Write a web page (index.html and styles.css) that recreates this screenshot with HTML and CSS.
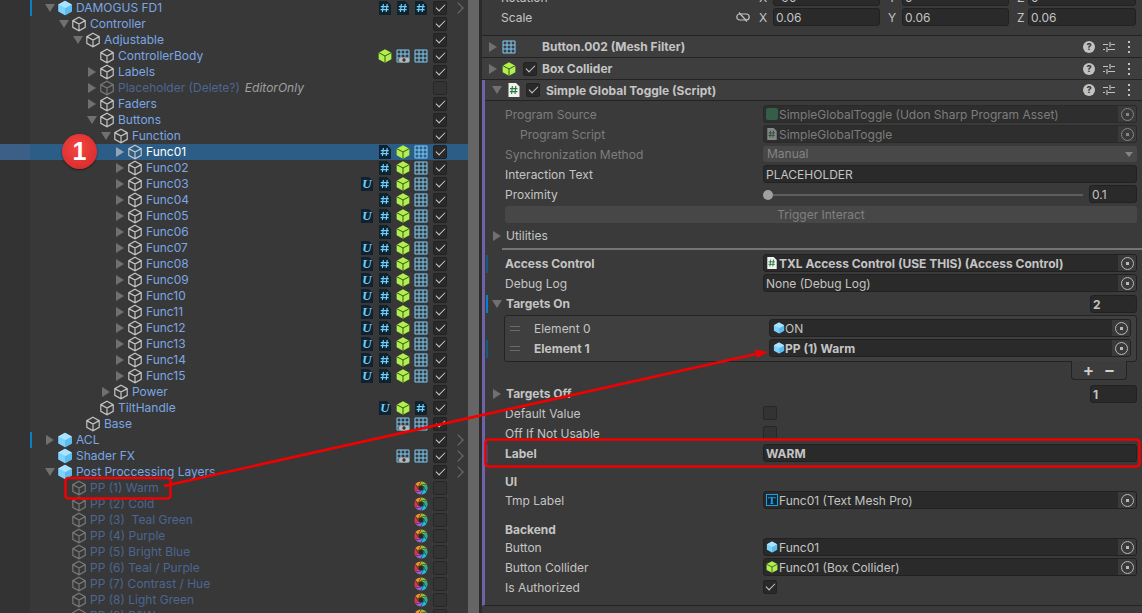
FILE: index.html
```html
<!DOCTYPE html>
<html lang="en">

<head>
    <title>Hierarchy and Inspector</title>
    <link rel="stylesheet" href="styles.css">
</head>

<body>
    <svg class="defs" width="0" height="0">
        <symbol id="cube" viewBox="0 0 16 16"><path class="cube-line" d="M8 1.2 14.2 4.6v6.8L8 14.8 1.8 11.4V4.6zM1.8 4.6 8 8l6.2-3.4M8 8v6.8"/></symbol>
        <symbol id="prefab" viewBox="0 0 16 16"><path fill="#7fd2fb" d="M8 .8 14.8 4.4v7.2L8 15.2 1.2 11.6V4.4z"/><path fill="#a9e3ff" d="M8 .8 14.8 4.4 8 8 1.2 4.4z"/><path fill="#5bbdee" d="M8 8.6 14.8 5v6.6L8 15.2z"/></symbol>
        <symbol id="green" viewBox="1 .5 14 15"><path fill="#aff04c" d="M8 .8 14.8 4.4v7.2L8 15.2 1.2 11.6V4.4z"/><path fill="none" stroke="#37451f" d="M1.2 4.4 8 8l6.8-3.6M8 8v7.2"/></symbol>
        <symbol id="grid" viewBox="0 0 14 14"><path class="grid-line" d="M1 1h12v12H1zM5 1v12M9 1v12M1 5h12M1 9h12"/></symbol>
        <symbol id="grid-eye" viewBox="0 0 14 14"><path class="grid-line" d="M1 1h12v12H1zM5 1v12M9 1v12M1 5h12M1 9h12"/><path fill="#383838" d="M1.5 11 8 7.2 14 11 8 14z"/><ellipse cx="8" cy="11" rx="5.6" ry="2.8" fill="#b8b8b8"/><circle cx="8" cy="11" r="1.7" fill="#333"/></symbol>
        <symbol id="hash" viewBox="0 0 14 14"><path fill="#10222d" d="M1 0h8l4 4v10H1z"/><path class="hash-line" d="M5.4 3 4.4 11M9.2 3 8.2 11M2.8 5.6h8M2.6 8.6h8"/></symbol>
        <symbol id="doc" viewBox="0 0 14 14"><path fill="#f2f2f2" d="M1.5 0h7.5l3.5 3.5V14H1.5z"/><path fill="none" stroke="#2b7a3c" stroke-width="1.1" d="M5.4 3 4.6 11M8.8 3 8 11M3 5.6h7.4M2.9 8.6h7.4"/></symbol>
        <symbol id="aperture" viewBox="0 0 16 16">
            <path fill="#8fbf2a" d="M8 8 8 .5A7.5 7.5 0 0 1 14.5 4.25z"/>
            <path fill="#1fb39a" d="M8 8 14.5 4.25A7.5 7.5 0 0 1 14.5 11.75z"/>
            <path fill="#2bb8ea" d="M8 8 14.5 11.75A7.5 7.5 0 0 1 8 15.5z"/>
            <path fill="#b05ac8" d="M8 8 8 15.5A7.5 7.5 0 0 1 1.5 11.75z"/>
            <path fill="#df3348" d="M8 8 1.5 11.75A7.5 7.5 0 0 1 1.5 4.25z"/>
            <path fill="#f0952a" d="M8 8 1.5 4.25A7.5 7.5 0 0 1 8 .5z"/>
            <path fill="none" stroke="#2a2a2a" stroke-width=".7" d="M8 4.6 13.8 3.6M10.9 6.3 14 11.9M10.9 9.7 8 15.4M8 11.4 2.2 12.4M5.1 9.7 2 4.1M5.1 6.3 8 .6"/>
            <path fill="#2a2a2a" d="M8 4.6 10.9 6.3v3.4L8 11.4 5.1 9.7V6.3z"/>
        </symbol>
        <symbol id="sliders" viewBox="0 0 12 12"><path class="tool-line" d="M0 3.5h5M8 3.5h4M7 1v5M0 8.5h2M5 8.5h7M4 6v5"/></symbol>
        <symbol id="dots" viewBox="0 0 4 12"><path fill="#c2c2c2" d="M1 0h2v2H1zM1 5h2v2H1zM1 10h2v2H1z"/></symbol>
        <symbol id="unlink" viewBox="0 0 14 10"><rect class="tool-line" x=".8" y="2" width="12.4" height="6" rx="3"/><path class="tool-line" d="M3 0.5 11 9.5"/></symbol>
    </svg>

    <div class="editor">
        <section class="hierarchy">
            <div class="row lv0"><span class="rail mark"></span><span class="tw d"></span><svg class="ico"><use href="#prefab"/></svg><span class="nm">DAMOGUS FD1</span><span class="badges"><svg><use href="#hash"/></svg><svg><use href="#hash"/></svg><svg><use href="#hash"/></svg></span><span class="check on"></span><span class="more"><i></i></span></div>
            <div class="row lv1"><span class="rail"></span><span class="tw d"></span><svg class="ico"><use href="#cube"/></svg><span class="nm">Controller</span><span class="badges"></span><span class="check on"></span><span class="more"></span></div>
            <div class="row lv2"><span class="rail"></span><span class="tw d"></span><svg class="ico"><use href="#cube"/></svg><span class="nm">Adjustable</span><span class="badges"></span><span class="check on"></span><span class="more"></span></div>
            <div class="row lv3"><span class="rail"></span><span class="tw"></span><svg class="ico"><use href="#cube"/></svg><span class="nm">ControllerBody</span><span class="badges"><svg><use href="#green"/></svg><svg><use href="#grid-eye"/></svg><svg><use href="#grid"/></svg></span><span class="check on"></span><span class="more"></span></div>
            <div class="row lv3"><span class="rail"></span><span class="tw r"></span><svg class="ico"><use href="#cube"/></svg><span class="nm">Labels</span><span class="badges"></span><span class="check on"></span><span class="more"></span></div>
            <div class="row lv3 dim"><span class="rail"></span><span class="tw r"></span><svg class="ico"><use href="#cube"/></svg><span class="nm">Placeholder (Delete?)</span><em class="tag">EditorOnly</em><span class="badges"></span><span class="check"></span><span class="more"></span></div>
            <div class="row lv3"><span class="rail"></span><span class="tw r"></span><svg class="ico"><use href="#cube"/></svg><span class="nm">Faders</span><span class="badges"></span><span class="check on"></span><span class="more"></span></div>
            <div class="row lv3"><span class="rail"></span><span class="tw d"></span><svg class="ico"><use href="#cube"/></svg><span class="nm">Buttons</span><span class="badges"></span><span class="check on"></span><span class="more"></span></div>
            <div class="row lv4"><span class="rail"></span><span class="tw d"></span><svg class="ico"><use href="#cube"/></svg><span class="nm">Function</span><span class="badges"></span><span class="check on"></span><span class="more"></span></div>
            <div class="row lv5 selected"><span class="rail"></span><span class="tw r"></span><svg class="ico"><use href="#cube"/></svg><span class="nm">Func01</span><span class="badges"><svg><use href="#hash"/></svg><svg><use href="#green"/></svg><svg><use href="#grid"/></svg></span><span class="check on"></span><span class="more"></span></div>
            <div class="row lv5"><span class="rail"></span><span class="tw r"></span><svg class="ico"><use href="#cube"/></svg><span class="nm">Func02</span><span class="badges"><svg><use href="#hash"/></svg><svg><use href="#green"/></svg><svg><use href="#grid"/></svg></span><span class="check on"></span><span class="more"></span></div>
            <div class="row lv5"><span class="rail"></span><span class="tw r"></span><svg class="ico"><use href="#cube"/></svg><span class="nm">Func03</span><span class="badges"><span class="udon">U</span><svg><use href="#hash"/></svg><svg><use href="#green"/></svg><svg><use href="#grid"/></svg></span><span class="check on"></span><span class="more"></span></div>
            <div class="row lv5"><span class="rail"></span><span class="tw r"></span><svg class="ico"><use href="#cube"/></svg><span class="nm">Func04</span><span class="badges"><svg><use href="#hash"/></svg><svg><use href="#green"/></svg><svg><use href="#grid"/></svg></span><span class="check on"></span><span class="more"></span></div>
            <div class="row lv5"><span class="rail"></span><span class="tw r"></span><svg class="ico"><use href="#cube"/></svg><span class="nm">Func05</span><span class="badges"><span class="udon">U</span><svg><use href="#hash"/></svg><svg><use href="#green"/></svg><svg><use href="#grid"/></svg></span><span class="check on"></span><span class="more"></span></div>
            <div class="row lv5"><span class="rail"></span><span class="tw r"></span><svg class="ico"><use href="#cube"/></svg><span class="nm">Func06</span><span class="badges"><svg><use href="#hash"/></svg><svg><use href="#green"/></svg><svg><use href="#grid"/></svg></span><span class="check on"></span><span class="more"></span></div>
            <div class="row lv5"><span class="rail"></span><span class="tw r"></span><svg class="ico"><use href="#cube"/></svg><span class="nm">Func07</span><span class="badges"><span class="udon">U</span><svg><use href="#hash"/></svg><svg><use href="#green"/></svg><svg><use href="#grid"/></svg></span><span class="check on"></span><span class="more"></span></div>
            <div class="row lv5"><span class="rail"></span><span class="tw r"></span><svg class="ico"><use href="#cube"/></svg><span class="nm">Func08</span><span class="badges"><span class="udon">U</span><svg><use href="#hash"/></svg><svg><use href="#green"/></svg><svg><use href="#grid"/></svg></span><span class="check on"></span><span class="more"></span></div>
            <div class="row lv5"><span class="rail"></span><span class="tw r"></span><svg class="ico"><use href="#cube"/></svg><span class="nm">Func09</span><span class="badges"><span class="udon">U</span><svg><use href="#hash"/></svg><svg><use href="#green"/></svg><svg><use href="#grid"/></svg></span><span class="check on"></span><span class="more"></span></div>
            <div class="row lv5"><span class="rail"></span><span class="tw r"></span><svg class="ico"><use href="#cube"/></svg><span class="nm">Func10</span><span class="badges"><span class="udon">U</span><svg><use href="#hash"/></svg><svg><use href="#green"/></svg><svg><use href="#grid"/></svg></span><span class="check on"></span><span class="more"></span></div>
            <div class="row lv5"><span class="rail"></span><span class="tw r"></span><svg class="ico"><use href="#cube"/></svg><span class="nm">Func11</span><span class="badges"><span class="udon">U</span><svg><use href="#hash"/></svg><svg><use href="#green"/></svg><svg><use href="#grid"/></svg></span><span class="check on"></span><span class="more"></span></div>
            <div class="row lv5"><span class="rail"></span><span class="tw r"></span><svg class="ico"><use href="#cube"/></svg><span class="nm">Func12</span><span class="badges"><span class="udon">U</span><svg><use href="#hash"/></svg><svg><use href="#green"/></svg><svg><use href="#grid"/></svg></span><span class="check on"></span><span class="more"></span></div>
            <div class="row lv5"><span class="rail"></span><span class="tw r"></span><svg class="ico"><use href="#cube"/></svg><span class="nm">Func13</span><span class="badges"><span class="udon">U</span><svg><use href="#hash"/></svg><svg><use href="#green"/></svg><svg><use href="#grid"/></svg></span><span class="check on"></span><span class="more"></span></div>
            <div class="row lv5"><span class="rail"></span><span class="tw r"></span><svg class="ico"><use href="#cube"/></svg><span class="nm">Func14</span><span class="badges"><span class="udon">U</span><svg><use href="#hash"/></svg><svg><use href="#green"/></svg><svg><use href="#grid"/></svg></span><span class="check on"></span><span class="more"></span></div>
            <div class="row lv5"><span class="rail"></span><span class="tw r"></span><svg class="ico"><use href="#cube"/></svg><span class="nm">Func15</span><span class="badges"><span class="udon">U</span><svg><use href="#hash"/></svg><svg><use href="#green"/></svg><svg><use href="#grid"/></svg></span><span class="check on"></span><span class="more"></span></div>
            <div class="row lv4"><span class="rail"></span><span class="tw r"></span><svg class="ico"><use href="#cube"/></svg><span class="nm">Power</span><span class="badges"></span><span class="check on"></span><span class="more"></span></div>
            <div class="row lv3"><span class="rail"></span><span class="tw"></span><svg class="ico"><use href="#cube"/></svg><span class="nm">TiltHandle</span><span class="badges"><span class="udon">U</span><svg><use href="#green"/></svg><svg><use href="#hash"/></svg></span><span class="check on"></span><span class="more"></span></div>
            <div class="row lv2"><span class="rail"></span><span class="tw"></span><svg class="ico"><use href="#cube"/></svg><span class="nm">Base</span><span class="badges"><svg><use href="#grid-eye"/></svg><svg><use href="#grid"/></svg></span><span class="check on"></span><span class="more"></span></div>
            <div class="row lv0"><span class="rail mark"></span><span class="tw r"></span><svg class="ico"><use href="#prefab"/></svg><span class="nm">ACL</span><span class="badges"></span><span class="check on"></span><span class="more"><i></i></span></div>
            <div class="row lv0"><span class="rail"></span><span class="tw"></span><svg class="ico"><use href="#prefab"/></svg><span class="nm">Shader FX</span><span class="badges"><svg><use href="#grid-eye"/></svg><svg><use href="#grid"/></svg></span><span class="check on"></span><span class="more"><i></i></span></div>
            <div class="row lv0"><span class="rail"></span><span class="tw d"></span><svg class="ico"><use href="#prefab"/></svg><span class="nm">Post Proccessing Layers</span><span class="badges"></span><span class="check on"></span><span class="more"><i></i></span></div>
            <div class="row lv1 dim"><span class="rail"></span><span class="tw"></span><svg class="ico"><use href="#cube"/></svg><span class="nm">PP (1) Warm</span><span class="badges"><svg><use href="#aperture"/></svg></span><span class="check"></span><span class="more"></span></div>
            <div class="row lv1 dim"><span class="rail"></span><span class="tw"></span><svg class="ico"><use href="#cube"/></svg><span class="nm">PP (2) Cold</span><span class="badges"><svg><use href="#aperture"/></svg></span><span class="check"></span><span class="more"></span></div>
            <div class="row lv1 dim"><span class="rail"></span><span class="tw"></span><svg class="ico"><use href="#cube"/></svg><span class="nm">PP (3) &nbsp;Teal Green</span><span class="badges"><svg><use href="#aperture"/></svg></span><span class="check"></span><span class="more"></span></div>
            <div class="row lv1 dim"><span class="rail"></span><span class="tw"></span><svg class="ico"><use href="#cube"/></svg><span class="nm">PP (4) Purple</span><span class="badges"><svg><use href="#aperture"/></svg></span><span class="check"></span><span class="more"></span></div>
            <div class="row lv1 dim"><span class="rail"></span><span class="tw"></span><svg class="ico"><use href="#cube"/></svg><span class="nm">PP (5) Bright Blue</span><span class="badges"><svg><use href="#aperture"/></svg></span><span class="check"></span><span class="more"></span></div>
            <div class="row lv1 dim"><span class="rail"></span><span class="tw"></span><svg class="ico"><use href="#cube"/></svg><span class="nm">PP (6) Teal / Purple</span><span class="badges"><svg><use href="#aperture"/></svg></span><span class="check"></span><span class="more"></span></div>
            <div class="row lv1 dim"><span class="rail"></span><span class="tw"></span><svg class="ico"><use href="#cube"/></svg><span class="nm">PP (7) Contrast / Hue</span><span class="badges"><svg><use href="#aperture"/></svg></span><span class="check"></span><span class="more"></span></div>
            <div class="row lv1 dim"><span class="rail"></span><span class="tw"></span><svg class="ico"><use href="#cube"/></svg><span class="nm">PP (8) Light Green</span><span class="badges"><svg><use href="#aperture"/></svg></span><span class="check"></span><span class="more"></span></div>
            <div class="row lv1 dim"><span class="rail"></span><span class="tw"></span><svg class="ico"><use href="#cube"/></svg><span class="nm">PP (9) B&amp;W</span><span class="badges"><svg><use href="#aperture"/></svg></span><span class="check"></span><span class="more"></span></div>
        </section>

        <div class="scrollbar"></div>

        <section class="inspector">
            <div class="transform">
                <div class="vec-row">
                    <span class="vec-lbl">Rotation</span>
                    <span class="vec-link"></span>
                    <div class="vec">
                        <div class="cell"><span class="axis">X</span><span class="field num">-90</span></div>
                        <div class="cell"><span class="axis">Y</span><span class="field num">0</span></div>
                        <div class="cell"><span class="axis axis-z">Z</span><span class="field num">0</span></div>
                    </div>
                </div>
                <div class="vec-row">
                    <span class="vec-lbl">Scale</span>
                    <svg class="vec-link"><use href="#unlink"/></svg>
                    <div class="vec">
                        <div class="cell"><span class="axis">X</span><span class="field num">0.06</span></div>
                        <div class="cell"><span class="axis">Y</span><span class="field num">0.06</span></div>
                        <div class="cell"><span class="axis axis-z">Z</span><span class="field num">0.06</span></div>
                    </div>
                </div>
            </div>

            <div class="comp-head">
                <span class="tw r"></span><svg class="comp-ico"><use href="#grid"/></svg><span class="comp-blank"></span>
                <span class="comp-title">Button.002 (Mesh Filter)</span>
                <span class="comp-tools"><span class="t-help">?</span><svg class="t-sliders"><use href="#sliders"/></svg><svg class="t-dots"><use href="#dots"/></svg></span>
            </div>
            <div class="comp-head">
                <span class="tw r"></span><svg class="comp-ico"><use href="#green"/></svg><span class="check on"></span>
                <span class="comp-title">Box Collider</span>
                <span class="comp-tools"><span class="t-help">?</span><svg class="t-sliders"><use href="#sliders"/></svg><svg class="t-dots"><use href="#dots"/></svg></span>
            </div>

            <div class="script">
                <div class="comp-head script-head">
                    <span class="tw d"></span><svg class="comp-ico"><use href="#doc"/></svg><span class="check on"></span>
                    <span class="comp-title">Simple Global Toggle (Script)</span>
                    <span class="comp-tools"><span class="t-help">?</span><svg class="t-sliders"><use href="#sliders"/></svg><svg class="t-dots"><use href="#dots"/></svg></span>
                </div>

                <div class="props">
                    <div class="prop off"><span class="lbl">Program Source</span><div class="field obj"><i class="mini-asset"></i><span>SimpleGlobalToggle (Udon Sharp Program Asset)</span><span class="pick"></span></div></div>
                    <div class="prop off"><span class="lbl sub">Program Script</span><div class="field obj"><svg class="mini"><use href="#doc"/></svg><span>SimpleGlobalToggle</span><span class="pick"></span></div></div>
                    <div class="prop off"><span class="lbl">Synchronization Method</span><div class="drop">Manual<i></i></div></div>
                    <div class="prop"><span class="lbl">Interaction Text</span><div class="field">PLACEHOLDER</div></div>
                    <div class="prop"><span class="lbl">Proximity</span><div class="slider"><span class="track"><i></i></span><span class="field num">0.1</span></div></div>
                    <div class="trigger">Trigger Interact</div>

                    <div class="prop fold"><span class="tw r"></span><span class="lbl">Utilities</span></div>
                    <div class="rule"></div>

                    <div class="prop changed strong"><span class="lbl">Access Control</span><div class="field obj"><svg class="mini"><use href="#doc"/></svg><span>TXL Access Control (USE THIS) (Access Control)</span><span class="pick"></span></div></div>
                    <div class="prop"><span class="lbl">Debug Log</span><div class="field obj"><span>None (Debug Log)</span><span class="pick"></span></div></div>
                    <div class="prop fold changed bright strong"><span class="tw d"></span><span class="lbl">Targets On</span><span class="field count">2</span></div>

                    <div class="list">
                        <div class="el"><span class="grip"></span><span class="el-lbl">Element 0</span><div class="field obj"><svg class="mini"><use href="#prefab"/></svg><span>ON</span><span class="pick"></span></div></div>
                        <div class="el changed strong"><span class="grip"></span><span class="el-lbl">Element 1</span><div class="field obj"><svg class="mini"><use href="#prefab"/></svg><span>PP (1) Warm</span><span class="pick"></span></div></div>
                    </div>
                    <div class="list-foot"><span>+</span><span>−</span></div>

                    <div class="prop fold strong"><span class="tw r"></span><span class="lbl">Targets Off</span><span class="field count">1</span></div>
                    <div class="prop"><span class="lbl">Default Value</span><span class="check"></span></div>
                    <div class="prop"><span class="lbl">Off If Not Usable</span><span class="check"></span></div>
                    <div class="prop changed strong"><span class="lbl">Label</span><div class="field">WARM</div></div>

                    <div class="group first">UI</div>
                    <div class="prop"><span class="lbl">Tmp Label</span><div class="field obj"><span class="mini-tmp">T</span><span>Func01 (Text Mesh Pro)</span><span class="pick"></span></div></div>

                    <div class="group">Backend</div>
                    <div class="prop"><span class="lbl">Button</span><div class="field obj"><svg class="mini"><use href="#prefab"/></svg><span>Func01</span><span class="pick"></span></div></div>
                    <div class="prop"><span class="lbl">Button Collider</span><div class="field obj"><svg class="mini"><use href="#green"/></svg><span>Func01 (Box Collider)</span><span class="pick"></span></div></div>
                    <div class="prop"><span class="lbl">Is Authorized</span><span class="check on"></span></div>
                </div>
            </div>
        </section>
    </div>

    <!-- annotations drawn over the screenshot -->
    <svg class="notes" width="1142" height="613" viewBox="0 0 1142 613">
        <rect x="65.5" y="478" width="105" height="20.5" rx="3"/>
        <rect x="485.5" y="439.5" width="654" height="27" rx="3"/>
        <path class="note-line" d="M164 486 756 354"/>
        <path class="note-head" d="M768 352 755 349.5 757 358z"/>
    </svg>
    <div class="callout">1</div>
</body>

</html>
```

FILE: styles.css
```css
* {
    box-sizing: border-box;
}

html, body {
    height: 100%;
}

body {
    margin: 0;
    overflow: hidden;
    background-color: #3a3a3a;
    color: #c4c4c4;
    font-family: Inter, "Noto Sans", sans-serif;
    font-size: 12px;
}

.defs {
    position: absolute;
}

.editor {
    display: flex;
    height: 613px;
    overflow: hidden;
}

/* icon strokes */
.cube-line {
    fill: none;
    stroke: #c4c4c4;
    stroke-width: 1.2;
}

.grid-line {
    fill: none;
    stroke: #7ccffb;
    stroke-width: 1;
}

.hash-line {
    fill: none;
    stroke: #6fd0ff;
    stroke-width: 1.2;
}

.tool-line {
    fill: none;
    stroke: #c2c2c2;
    stroke-width: 1.2;
}

/* hierarchy */
.hierarchy {
    width: 468px;
    flex: none;
    background-color: #383838;
}

.row {
    display: flex;
    align-items: center;
    height: 16px;
    color: #7ba6e4;
}

.rail {
    width: 30px;
    height: 16px;
    flex: none;
    background-color: #333333;
}

.rail.mark {
    border-right: 2px solid #0b7fc4;
    width: 32px;
    margin-right: -2px;
    background-clip: padding-box;
}

.tw {
    flex: none;
    width: 14px;
    height: 10px;
    margin-left: 13px;
    position: relative;
}

.tw::after {
    content: "";
    position: absolute;
}

.tw.r::after {
    left: 3px;
    top: 0;
    border-left: 8px solid #707070;
    border-top: 5px solid transparent;
    border-bottom: 5px solid transparent;
}

.tw.d::after {
    left: 2px;
    top: 1px;
    border-top: 8px solid #707070;
    border-left: 5px solid transparent;
    border-right: 5px solid transparent;
}

.lv1 .tw { margin-left: 27px; }
.lv2 .tw { margin-left: 41px; }
.lv3 .tw { margin-left: 55px; }
.lv4 .tw { margin-left: 69px; }
.lv5 .tw { margin-left: 83px; }

.ico {
    width: 16px;
    height: 16px;
    flex: none;
    margin-right: 3px;
}

.nm, .tag {
    line-height: 15px;
    padding-bottom: 1px;
}

.nm {
    white-space: pre;
}

.tag {
    margin-left: 5px;
    color: #a0a0a0;
}

.badges {
    display: flex;
    gap: 4px;
    margin-left: auto;
    margin-right: 5px;
}

.badges svg {
    width: 14px;
    height: 14px;
}

.udon {
    width: 14px;
    height: 14px;
    background-color: #10222d;
    clip-path: polygon(7% 0, 64% 0, 93% 28%, 93% 100%, 7% 100%);
    color: #6fd0ff;
    font-family: "Liberation Serif", serif;
    font-style: italic;
    font-weight: 700;
    font-size: 13px;
    line-height: 14px;
    text-align: center;
}

.check {
    display: block;
    position: relative;
    flex: none;
    width: 14px;
    height: 14px;
    background-color: #333333;
    border: 1px solid #272727;
    border-radius: 2px;
}

.check.on {
    background-color: #292929;
    border-color: #222222;
}

.check.on::after {
    content: "";
    position: absolute;
    left: 2px;
    top: 2px;
    width: 8px;
    height: 4px;
    border-left: 1.5px solid #cccccc;
    border-bottom: 1.5px solid #cccccc;
    transform: rotate(-45deg);
}

.more {
    width: 21px;
    height: 16px;
    flex: none;
    position: relative;
}

.more i {
    position: absolute;
    left: 7px;
    top: 4px;
    width: 8px;
    height: 8px;
    border-top: 1.5px solid #707070;
    border-right: 1.5px solid #707070;
    transform: rotate(45deg);
}

.dim {
    color: #4c6693;
}

.dim .ico {
    opacity: 0.45;
}

.selected {
    background-color: #2c5d87;
    color: #ffffff;
}

.selected .rail {
    background-color: #3c5f88;
}

.selected .tw.r::after {
    border-left-color: #8ea6bb;
}

/* splitter between the two panes */
.scrollbar {
    width: 14px;
    flex: none;
    background-color: #656565;
    border-right: 3px solid #2b2b2b;
}

/* inspector */
.inspector {
    flex: 1;
    min-width: 0;
    background-color: #3a3a3a;
}

.transform {
    margin-top: -12px;
    padding-bottom: 7px;
    border-bottom: 1px solid #232323;
}

.vec-row {
    display: flex;
    align-items: flex-start;
    height: 20px;
    padding-left: 19px;
    padding-right: 5px;
}

.vec-lbl {
    width: 235px;
    line-height: 19px;
}

.vec-link {
    width: 14px;
    height: 10px;
    margin-top: 4px;
    margin-right: 9px;
    flex: none;
}

.vec {
    display: grid;
    grid-template-columns: 121px 121px 119px;
    gap: 8px;
    flex: 1;
}

.cell {
    display: flex;
    align-items: center;
}

.axis {
    width: 14px;
    flex: none;
}

.axis-z {
    width: 11px;
}

.field {
    flex: 1;
    min-width: 0;
    height: 18px;
    line-height: 17px;
    padding-left: 2px;
    background-color: #2a2a2a;
    border: 1px solid #212121;
    border-radius: 3px;
    white-space: nowrap;
}

.comp-head {
    display: flex;
    align-items: center;
    height: 22px;
    padding-left: 4px;
    padding-right: 7px;
    background-color: #3e3e3e;
    border-bottom: 1px solid #232323;
    font-weight: 700;
}

.comp-head .tw {
    margin-left: 0;
    width: 15px;
}

.comp-ico {
    width: 14px;
    height: 14px;
    flex: none;
    margin-left: 1px;
    margin-right: 7px;
}

.comp-blank {
    width: 14px;
    flex: none;
}

.comp-title {
    margin-left: 5px;
}

.comp-tools {
    display: flex;
    align-items: center;
    margin-left: auto;
}

.t-help {
    width: 12px;
    height: 12px;
    border-radius: 50%;
    background-color: #c2c2c2;
    color: #383838;
    font-size: 9px;
    font-weight: 800;
    line-height: 12px;
    text-align: center;
}

.t-sliders {
    width: 12px;
    height: 12px;
    margin-left: 8px;
}

.t-dots {
    width: 4px;
    height: 12px;
    margin-left: 12px;
    margin-right: 4px;
}

.script {
    border-left: 3px solid #6e62a8;
    margin-bottom: 0;
    border-bottom: 1px solid #232323;
}

.script-head {
    height: 21px;
    padding-left: 5px;
}

.script-head .comp-ico {
    margin-left: 2px;
    margin-right: 5px;
}

.script-head .comp-title {
    margin-left: 6px;
}

.props {
    padding: 4px 5px 7px 20px;
}

.prop {
    display: flex;
    align-items: flex-start;
    position: relative;
    height: 20px;
}

.prop > .check {
    margin-top: 2px;
}

.lbl {
    width: 258px;
    flex: none;
    line-height: 20px;
}

.lbl.sub {
    padding-left: 15px;
}

.off .lbl {
    color: #7d7d7d;
}

.off .field {
    background-color: #2e2e2e;
    border-color: #2a2a2a;
    color: #7d7d7d;
}

.off .pick::after {
    opacity: 0.6;
}

.off .mini, .off .mini-asset {
    opacity: 0.45;
}

.strong .lbl, .strong .el-lbl, .strong .field {
    font-weight: 700;
}

.changed::before {
    content: "";
    position: absolute;
    left: -19px;
    top: 1px;
    width: 2px;
    height: 18px;
    background-color: #175a80;
}

.changed.bright::before {
    background-color: #0b7fc4;
}

.obj {
    display: flex;
    align-items: center;
    overflow: hidden;
}

.obj > span:not(.pick):not(.mini-tmp) {
    padding-top: 1px;
}

.mini, .mini-asset, .mini-tmp {
    display: block;
    width: 12px;
    height: 12px;
    flex: none;
    margin-right: 1px;
}

.mini-asset {
    background-color: #3f9a6a;
    border-radius: 2px;
}

.mini-tmp {
    background-color: #15232c;
    border: 1px solid #12a4ea;
    color: #12a4ea;
    font-family: "Liberation Serif", serif;
    font-weight: 700;
    font-size: 11px;
    line-height: 10px;
    text-align: center;
}

.pick {
    width: 18px;
    height: 16px;
    flex: none;
    margin-left: auto;
    background-color: #3a3a3a;
    position: relative;
}

.pick::after {
    content: "";
    position: absolute;
    left: 3px;
    top: 2px;
    width: 11px;
    height: 11px;
    border: 1px solid #b8b8b8;
    border-radius: 50%;
    background: radial-gradient(circle, #b8b8b8 0 1.5px, transparent 2px);
}

.drop {
    flex: 1;
    height: 16px;
    margin-top: 1px;
    line-height: 16px;
    padding-left: 4px;
    background-color: #484848;
    border-radius: 3px;
    color: #848484;
    position: relative;
}

.drop i {
    position: absolute;
    right: 4px;
    top: 6px;
    border-top: 5px solid #848484;
    border-left: 4px solid transparent;
    border-right: 4px solid transparent;
}

.slider {
    display: flex;
    flex: 1;
    align-items: flex-start;
    gap: 6px;
}

.track {
    flex: 1;
    height: 2px;
    margin-top: 9px;
    background-color: #5e5e5e;
    position: relative;
}

.track i {
    position: absolute;
    left: 0;
    top: -4px;
    width: 10px;
    height: 10px;
    border-radius: 50%;
    background-color: #a0a0a0;
}

.slider .field {
    flex: none;
    width: 48px;
}

.trigger {
    height: 17px;
    margin: 1px 0 3px;
    line-height: 17px;
    text-align: center;
    background-color: #474747;
    border-radius: 3px;
    color: #808080;
}

.fold {
    margin-left: -15px;
}

.fold .tw {
    margin-left: 0;
    width: 16px;
    margin-top: 5px;
}

.fold .lbl {
    width: auto;
}

.fold.changed::before {
    left: -4px;
}

.count {
    flex: none;
    width: 47px;
    margin-left: auto;
    margin-top: 1px;
}

.rule {
    height: 2px;
    margin: 2px -5px 4px -3px;
    background-color: #747474;
}

.list {
    height: 47px;
    margin: 1px 0 0 -1px;
    padding: 3px 5px 0;
    background-color: #3f3f3f;
    border: 1px solid #232323;
    border-radius: 3px;
}

.el {
    display: flex;
    align-items: flex-start;
    height: 20px;
    position: relative;
}

.el.changed::before {
    left: -24px;
}

.grip {
    width: 10px;
    height: 5px;
    flex: none;
    margin-top: 7px;
    margin-right: 14px;
    border-top: 1px solid #6a6a6a;
    border-bottom: 1px solid #6a6a6a;
}

.el-lbl {
    width: 235px;
    flex: none;
    line-height: 20px;
}

.el .obj {
    padding-left: 3px;
}

.el .mini {
    margin-right: 0;
}

.list-foot {
    display: flex;
    align-items: center;
    justify-content: space-around;
    width: 56px;
    height: 19px;
    margin: -1px 10px 4px auto;
    padding: 0 6px;
    background-color: #3c3c3c;
    border: 1px solid #232323;
    border-top: none;
    border-radius: 0 0 4px 4px;
    font-size: 17px;
    font-weight: 600;
    color: #d0d0d0;
}

.group {
    height: 17px;
    margin-top: 10px;
    line-height: 17px;
    font-weight: 700;
}

.group.first {
    height: 18px;
    margin-top: 9px;
}

/* annotations */
.notes {
    position: absolute;
    left: 0;
    top: 0;
    pointer-events: none;
}

.notes rect {
    fill: none;
    stroke: #f00000;
    stroke-width: 2.5;
}

.note-line {
    fill: none;
    stroke: #f00000;
    stroke-width: 2.6;
}

.note-head {
    fill: #f00000;
}

.callout {
    position: absolute;
    left: 62px;
    top: 134px;
    width: 35px;
    height: 35px;
    border-radius: 50%;
    background: radial-gradient(circle at 45% 40%, #f4453f, #dc2f30 70%, #a82022);
    box-shadow: 0 1px 2px rgba(0, 0, 0, 0.5);
    color: #ffffff;
    font-family: "Liberation Sans", sans-serif;
    font-size: 25px;
    font-weight: 700;
    line-height: 35px;
    text-align: center;
}
```
